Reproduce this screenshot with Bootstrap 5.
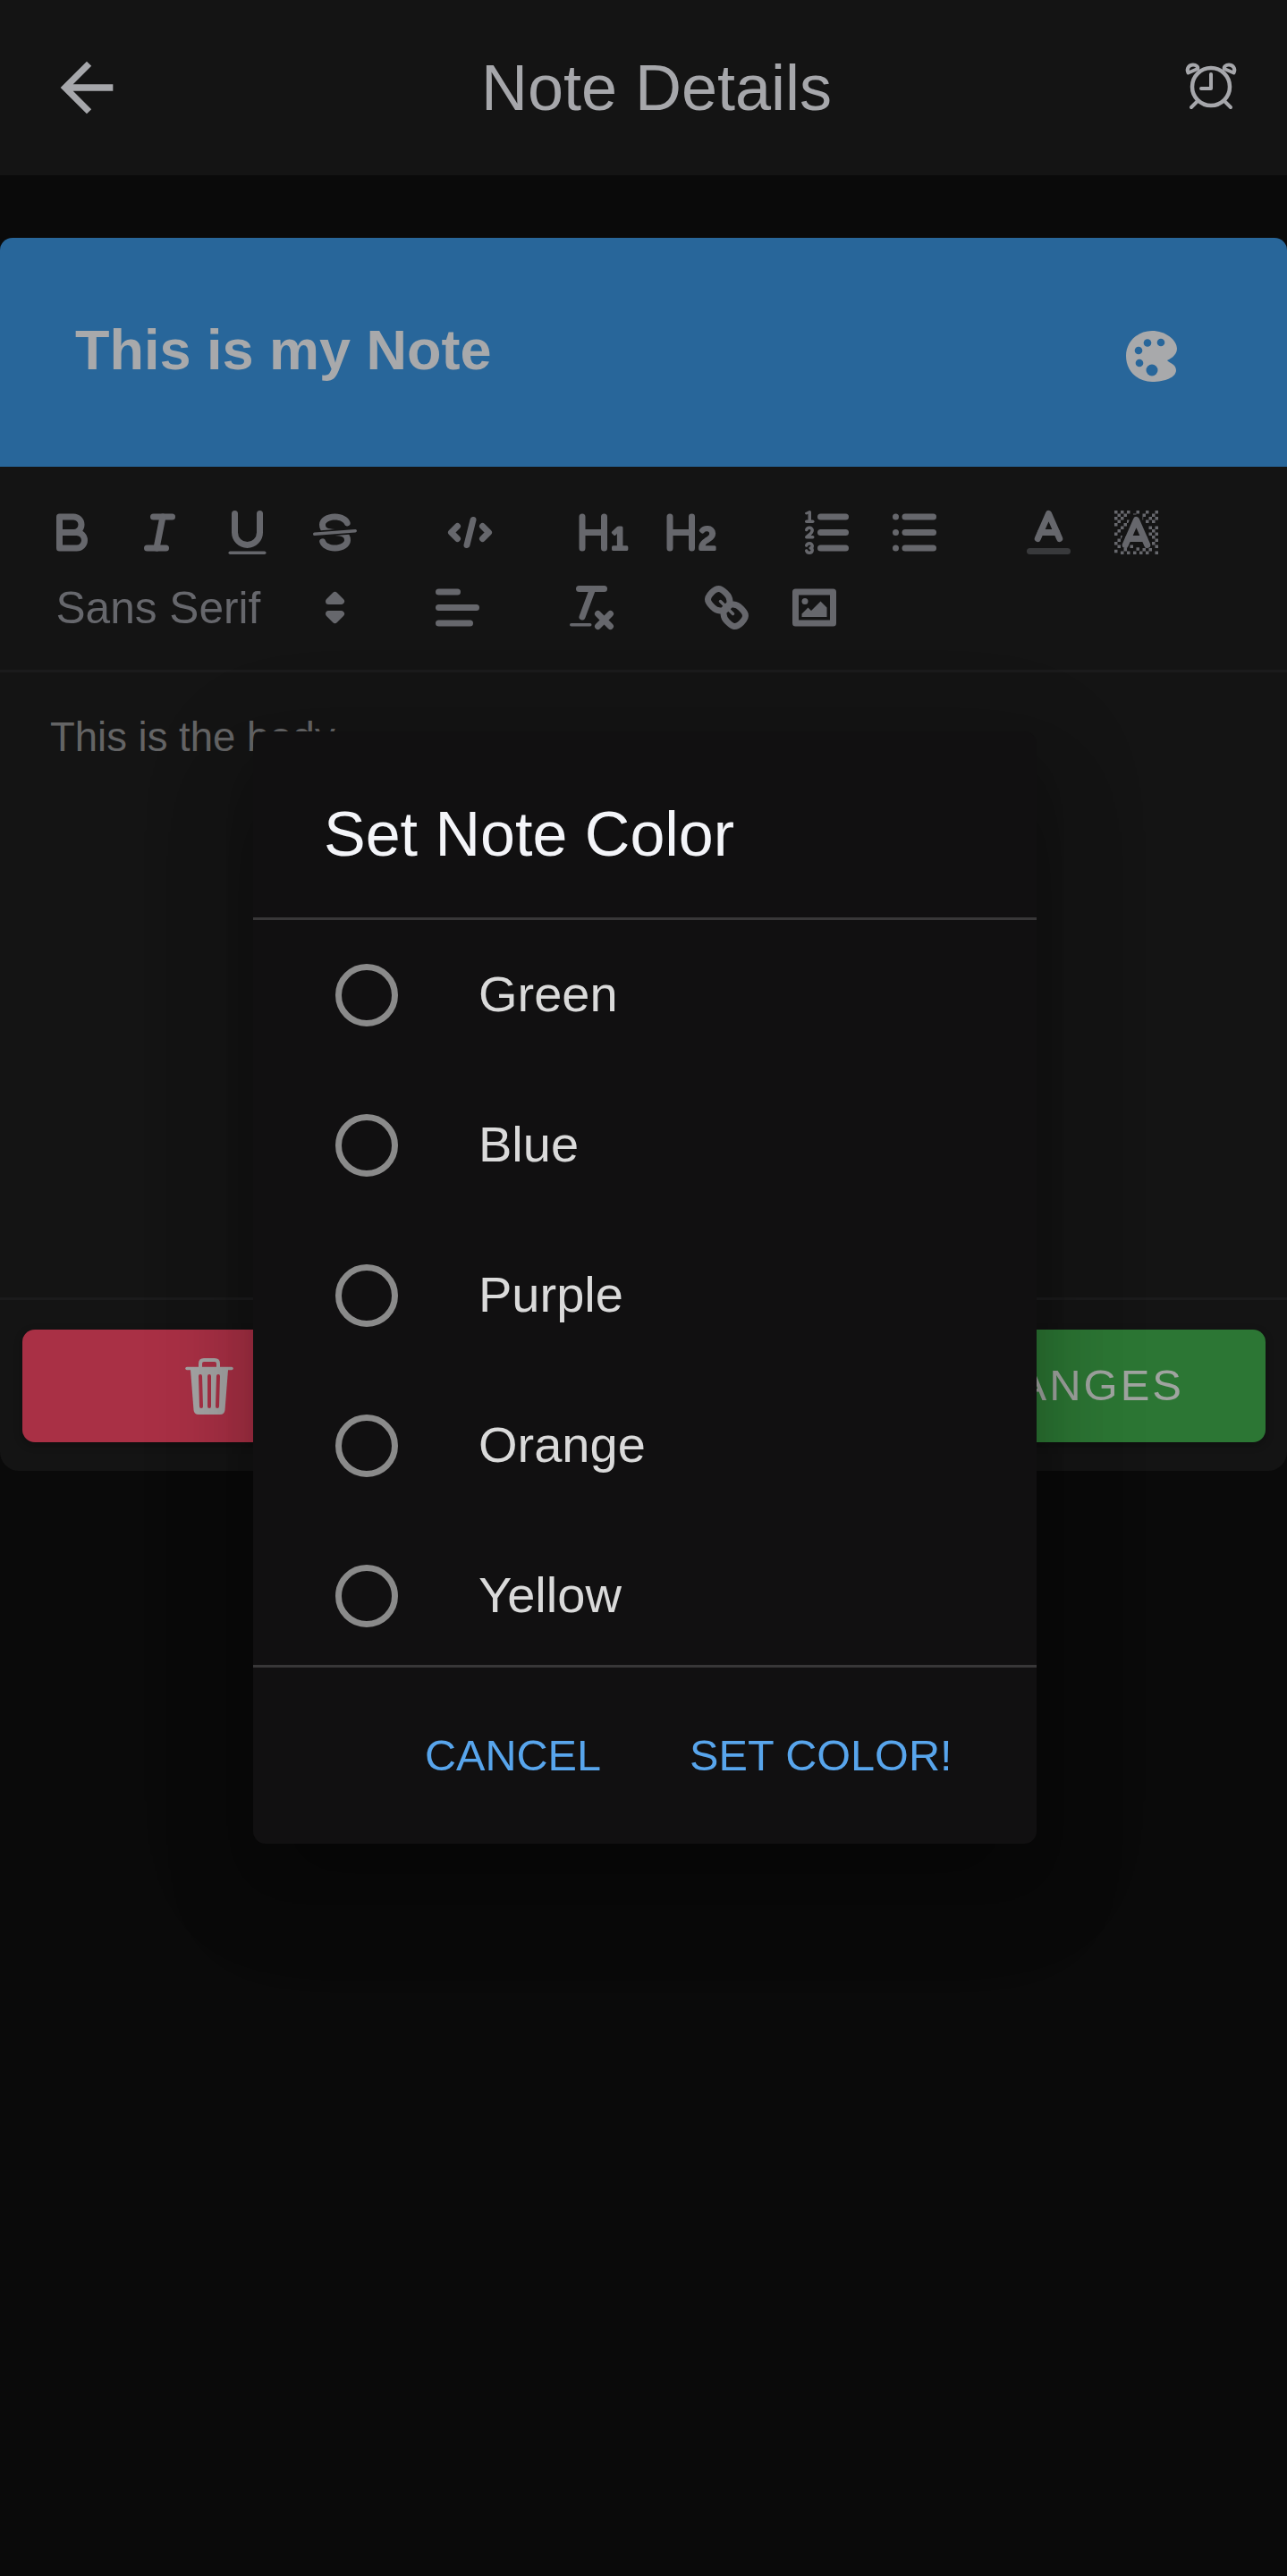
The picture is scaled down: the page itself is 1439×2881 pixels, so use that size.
<!DOCTYPE html>
<html lang="en">
<head>
<meta charset="utf-8">
<title>Note Details</title>
<link href="https://cdn.jsdelivr.net/npm/bootstrap@5.3.0/dist/css/bootstrap.min.css" rel="stylesheet">
<style>
html,body{margin:0;background:#0a0a0a}
body{font-family:"Liberation Sans",Arial,sans-serif;overflow:hidden}
.stage{position:relative;height:2881px;background:#0a0a0a}
.appbar{height:195.5px;background:#141414;color:#a6a7ab}
.appbar-title{font-size:72px;line-height:1;padding-left:17px;margin:0;font-weight:400}
.back-ic{width:88px;height:88px;margin-left:53px;fill:currentColor}
.alarm-ic{width:90px;height:80px;margin-right:39px;flex:none}
.note-card{margin-top:70.5px}
.note-head{height:255.5px;background:#28669a;color:#a8a9ab;border-radius:14px 14px 0 0;padding-left:84px;padding-right:104px}
.note-title{font-size:63px;font-weight:700;line-height:1;margin:0 0 5px;white-space:nowrap}
.pal-ic{width:90px;height:80px;margin-top:13px}
.note-body{background:#141414;border-radius:0 0 21px 21px}
.tbar{padding:31.5px 31.5px 28px;border-bottom:3.5px solid #1b1b1c;color:#66676c}
.tgroup{margin-right:52.5px}
.tbtn{width:98px;height:84px;padding:10.5px 17.5px;flex:none}
.tbtn svg,.pick svg{width:63px;height:63px;display:block}
.pick{width:378px;height:84px;padding-left:31px;font-size:49.6px;line-height:84px;flex:none}
.pick span{margin-top:1px}
.pick svg{margin-right:4px}
.qs{fill:none;stroke:currentColor;stroke-width:2;stroke-linecap:round;stroke-linejoin:round}
.qt{stroke-width:1}
.qf{fill:currentColor;stroke:none}
.qd{stroke:#38393b}
.editor{height:702px;padding:40.5px 52.5px 0 56px;border-bottom:3.5px solid #1b1b1c;color:#646465;font-size:45.5px;line-height:64.6px}
.editor p{margin:0}
.foot-row{padding:33px 24.5px 32px}
.act-del,.act-save{height:125.5px;border-radius:14px;border:0;box-shadow:0 3px 10px rgba(0,0,0,.3);padding:0}
.act-del{width:419px;background:#a93045;color:#a5a5a5}
.act-del svg{width:80px;height:80px;margin-bottom:10px;display:block}
.act-save{width:600px;background:#2c7634;color:#a0a4a0;font-size:49px;letter-spacing:3px}
.dlg{position:absolute;left:283px;top:818px;width:875.5px;height:1243.5px;background:#111011;border-radius:14px;color:#dadada;
 box-shadow:0 38.5px 52.5px -24.5px rgba(0,0,0,.2),0 70px 100px 6px rgba(0,0,0,.14),0 31.5px 120px 16px rgba(0,0,0,.12)}
.dlg-title{height:210.5px;border-bottom:3.5px solid #383738;padding:80px 0 0 79px;font-size:70px;line-height:1;color:#f4f5f9;font-weight:400;margin:0}
.dlg-list{height:833.5px;overflow:hidden}
.opt{height:168px;padding-left:92px;font-size:56px;line-height:1;margin:0}
.opt .form-check-input{width:70px;height:70px;margin:0 90px 0 0;background:transparent;border:7px solid #8a8a8a;float:none;flex:none}
.opt-text{margin-top:-1px}
.dlg-actions{border-top:3.5px solid #383738;height:196px;padding-right:94px;padding-top:4px}
.dlg-btn{font-size:48.6px;line-height:1;color:#58a5ec;background:none;border:0;padding:0;margin-left:99px}
.dlg-btn:hover{color:#58a5ec}
</style>
</head>
<body>
<div class="stage">
  <header class="appbar d-flex align-items-center justify-content-between">
    <svg class="back-ic flex-none" viewBox="0 0 24 24"><path d="M20 11H7.83l5.59-5.59L12 4l-8 8 8 8 1.41-1.41L7.83 13H20v-2z"/></svg>
    <h1 class="appbar-title">Note Details</h1>
    <svg class="alarm-ic" viewBox="0 0 90 80" fill="none" stroke="currentColor" stroke-linecap="round" stroke-linejoin="round">
      <circle cx="44" cy="39" r="21" stroke-width="4.500"/>
      <polyline points="44,25 44,41 33,41" stroke-width="4"/>
      <path d="M22 62l6-6M66 62l-6-6" stroke-width="4"/>
      <path d="M18.500 23.500C16 18 20 14.500 24 14.500 27.500 14.500 30 17 29 19Z" stroke-width="4"/>
      <path d="M69.500 23.500C72 18 68 14.500 64 14.500 60.500 14.500 58 17 59 19Z" stroke-width="4"/>
    </svg>
  </header>

  <main class="note-card">
    <section class="note-head d-flex align-items-center justify-content-between">
      <h2 class="note-title">This is my Note</h2>
      <svg class="pal-ic" viewBox="0 0 90 80">
        <path fill="currentColor" d="M43 10C58 10 71 20 71 30 71 38 62 42 60 43 62 46 70 47 70 54 70 62 58 67 43 67 26 67 14 54 14 38 14 22 27 10 43 10Z"/>
        <g fill="#28669a"><circle cx="38" cy="23.500" r="4.300"/><circle cx="53" cy="23" r="4.300"/><circle cx="28" cy="32" r="4.300"/><circle cx="29" cy="46" r="4.300"/><circle cx="43" cy="54" r="6.500"/></g>
      </svg>
    </section>

    <section class="note-body">
      <div class="tbar d-flex flex-wrap">
        <div class="tgroup d-flex">
          <span class="tbtn"><svg viewBox="0 0 18 18"><path class="qs" d="M5,4H9.5A2.5,2.5,0,0,1,12,6.5v0A2.5,2.5,0,0,1,9.5,9H5A0,0,0,0,1,5,9V4A0,0,0,0,1,5,4Z"/><path class="qs" d="M5,9h5.5A2.5,2.5,0,0,1,13,11.5v0A2.5,2.5,0,0,1,10.5,14H5a0,0,0,0,1,0,0V9A0,0,0,0,1,5,9Z"/></svg></span>
          <span class="tbtn"><svg viewBox="0 0 18 18"><line class="qs" x1="7" x2="13" y1="4" y2="4"/><line class="qs" x1="5" x2="11" y1="14" y2="14"/><line class="qs" x1="8" x2="10" y1="14" y2="4"/></svg></span>
          <span class="tbtn"><svg viewBox="0 0 18 18"><path class="qs" d="M5,3V9a4.012,4.012,0,0,0,4,4H9a4.012,4.012,0,0,0,4-4V3"/><rect class="qf" height="1" rx=".5" ry=".5" width="12" x="3" y="15"/></svg></span>
          <span class="tbtn"><svg viewBox="0 0 18 18"><line class="qs qt" x1="15.5" x2="2.5" y1="8.5" y2="9.500"/><path class="qf" d="M9.007,8C6.542,7.791,6,7.519,6,6.5,6,5.792,7.283,5,9,5c1.571,0,2.765.679,2.969,1.309a1,1,0,0,0,1.9-.617C13.356,4.106,11.354,3,9,3,6.2,3,4,4.538,4,6.5a3.2,3.2,0,0,0,.5,1.843Z"/><path class="qf" d="M8.984,10C11.457,10.208,12,10.479,12,11.5c0,.708-1.283,1.5-3,1.5-1.571,0-2.765-.679-2.969-1.309a1,1,0,1,0-1.9.617C4.644,13.894,6.646,15,9,15c2.8,0,5-1.538,5-3.5a3.2,3.2,0,0,0-.5-1.843Z"/></svg></span>
        </div>
        <div class="tgroup d-flex">
          <span class="tbtn"><svg viewBox="0 0 18 18"><polyline class="qs" points="5 7 3 9 5 11"/><polyline class="qs" points="13 7 15 9 13 11"/><line class="qs" x1="10" x2="8" y1="5" y2="13"/></svg></span>
        </div>
        <div class="tgroup d-flex">
          <span class="tbtn"><svg viewBox="0 0 18 18"><path class="qf" d="M10,4V14a1,1,0,0,1-2,0V10H3v4a1,1,0,0,1-2,0V4A1,1,0,0,1,3,4V8H8V4a1,1,0,0,1,2,0Zm6.06787,9.209H14.98975V7.59863a.54085.54085,0,0,0-.605-.60547h-.62744a1.01119,1.01119,0,0,0-.748.29688L11.645,8.56641a.5435.5435,0,0,0-.022.8584l.28613.30762a.53861.53861,0,0,0,.84717.0332l.09912-.08789a1.2137,1.2137,0,0,0,.2417-.35254h.02246s-.01123.30859-.01123.60547V13.209H12.041a.54085.54085,0,0,0-.605.60547v.43945a.54085.54085,0,0,0,.605.60547h4.02686a.54085.54085,0,0,0,.605-.60547v-.43945A.54085.54085,0,0,0,16.06787,13.209Z"/></svg></span>
          <span class="tbtn"><svg viewBox="0 0 18 18"><path class="qf" d="M16.73975,13.81445v.43945a.54085.54085,0,0,1-.605.60547H11.855a.58392.58392,0,0,1-.64893-.60547V14.0127c0-2.90527,3.39941-3.42187,3.39941-4.55469a.77675.77675,0,0,0-.84717-.78125,1.17684,1.17684,0,0,0-.83594.38477c-.2749.26367-.561.374-.85791.13184l-.4292-.34082c-.30811-.24219-.38525-.51758-.1543-.81445a2.97155,2.97155,0,0,1,2.45361-1.17676,2.45393,2.45393,0,0,1,2.68408,2.40918c0,2.45312-3.1792,2.92676-3.27832,3.93848h2.79443A.54085.54085,0,0,1,16.73975,13.81445ZM9,3A.99974.99974,0,0,0,8,4V8H3V4A1,1,0,0,0,1,4V14a1,1,0,0,0,2,0V10H8v4a1,1,0,0,0,2,0V4A.99974.99974,0,0,0,9,3Z"/></svg></span>
        </div>
        <div class="tgroup d-flex">
          <span class="tbtn"><svg viewBox="0 0 18 18"><line class="qs" x1="7" x2="15" y1="4" y2="4"/><line class="qs" x1="7" x2="15" y1="9" y2="9"/><line class="qs" x1="7" x2="15" y1="14" y2="14"/><line class="qs qt" x1="2.5" x2="4.5" y1="5.5" y2="5.5"/><path class="qf" d="M3.5,6A0.5,0.5,0,0,1,3,5.5V3.085l-0.276.138A0.5,0.5,0,0,1,2.053,3c-0.124-.247-0.023-0.324.224-0.447l1-.5A0.5,0.5,0,0,1,4,2.5v3A0.5,0.5,0,0,1,3.5,6Z"/><path class="qs qt" d="M4.5,10.5h-2c0-.234,1.85-1.076,1.85-2.234A0.959,0.959,0,0,0,2.5,8.156"/><path class="qs qt" d="M2.5,14.846a0.959,0.959,0,0,0,1.85-.109A0.7,0.7,0,0,0,3.75,14a0.688,0.688,0,0,0,.6-0.736,0.959,0.959,0,0,0-1.85-.109"/></svg></span>
          <span class="tbtn"><svg viewBox="0 0 18 18"><line class="qs" x1="6" x2="15" y1="4" y2="4"/><line class="qs" x1="6" x2="15" y1="9" y2="9"/><line class="qs" x1="6" x2="15" y1="14" y2="14"/><line class="qs" x1="3" x2="3" y1="4" y2="4"/><line class="qs" x1="3" x2="3" y1="9" y2="9"/><line class="qs" x1="3" x2="3" y1="14" y2="14"/></svg></span>
        </div>
        <div class="tgroup d-flex">
          <span class="tbtn"><svg viewBox="0 0 18 18"><line class="qs qd" x1="3" x2="15" y1="15" y2="15"/><polyline class="qs" points="5.5 11 9 3 12.5 11"/><line class="qs" x1="11.63" x2="6.38" y1="9" y2="9"/></svg></span>
          <span class="tbtn"><svg viewBox="0 0 18 18"><path class="qf" d="M2 2h1v1h-1zM4 2h1v1h-1zM6 2h1v1h-1zM9 2h1v1h-1zM12 2h1v1h-1zM15 2h1v1h-1zM3 3h1v1h-1zM5 3h1v1h-1zM8 3h1v.3h-1zM11 3h1v1h-1zM14 3h1v1h-1zM2 4h1v1h-1zM4 4h1v1h-1zM11 4h.2v1h-.2zM13 4h1v1h-1zM15 4h1v1h-1zM3 5h1v1h-1zM6 5h.8l-.4 1h-.4zM12 5h1v1h-1zM14 5h1v1h-1zM2 6h1v1h-1zM5 6h1v1h-1zM13 7h1v1h-1zM15 7h1v1h-1zM4 7h1v1h-1zM3 8h1v1h-1zM14 8h1v1h-1zM2 9h1v1h-1zM13 9h1v1h-1zM15 9h1v1h-1zM4 10h.6l-.4 1h-.2zM14 10h1v1h-1zM3 11h1v1h-1zM15 11h1v1h-1zM2 12h1v1h-1zM14 12h1v1h-1zM3 13h1v1h-1zM15 13h1v1h-1zM7 13h1v1h-1zM9 13.800h1v1h-1zM11 14h1v1h-1zM13 14h1v1h-1zM2 14.500h1v1h-1zM5 14h1v1h-1zM4 15h1v1h-1zM6 15h1v1h-1zM8 15h1v1h-1zM10 15h1v1h-1zM12 15h1v1h-1zM15 15h1v1h-1z"/><polyline class="qs" points="5.5 13 9 5 12.5 13"/><line class="qs" x1="11.63" x2="6.38" y1="11" y2="11"/></svg></span>
        </div>
        <div class="tgroup d-flex">
          <div class="pick d-flex justify-content-between align-items-center"><span>Sans Serif</span><svg viewBox="0 0 18 18"><polygon class="qs" points="7 11 9 13 11 11 7 11"/><polygon class="qs" points="7 7 9 5 11 7 7 7"/></svg></div>
        </div>
        <div class="tgroup d-flex">
          <span class="tbtn"><svg viewBox="0 0 18 18"><line class="qs" x1="3" x2="15" y1="9" y2="9"/><line class="qs" x1="3" x2="13" y1="14" y2="14"/><line class="qs" x1="3" x2="9" y1="4" y2="4"/></svg></span>
        </div>
        <div class="tgroup d-flex">
          <span class="tbtn"><svg viewBox="0 0 18 18"><line class="qs" x1="5" x2="13" y1="3" y2="3"/><line class="qs" x1="6" x2="9.35" y1="12" y2="3"/><line class="qs" x1="11" x2="15" y1="11" y2="15"/><line class="qs" x1="15" x2="11" y1="11" y2="15"/><rect class="qf" height="1" rx=".5" ry=".5" width="7" x="2" y="14"/></svg></span>
        </div>
        <div class="tgroup d-flex">
          <span class="tbtn"><svg viewBox="0 0 18 18"><line class="qs qt" x1="7" x2="11" y1="7" y2="11"/><path class="qs" d="M8.9,4.577a3.476,3.476,0,0,1,.36,4.679A3.476,3.476,0,0,1,4.577,8.9C3.185,7.5,2.035,6.4,4.217,4.217S7.5,3.185,8.9,4.577Z"/><path class="qs" d="M13.423,9.1a3.476,3.476,0,0,0-4.679-.36,3.476,3.476,0,0,0,.36,4.679c1.392,1.392,2.5,2.542,4.679.36S14.815,10.5,13.423,9.1Z"/></svg></span>
          <span class="tbtn"><svg viewBox="0 0 18 18"><rect class="qs" height="10" width="12" x="3" y="4"/><circle class="qf" cx="6" cy="7" r="1"/><polyline class="qf" points="5 12 5 11 7 9 8 10 11 7 13 9 13 12 5 12"/></svg></span>
        </div>
      </div>

      <div class="editor"><p>This is the body</p></div>

      <div class="foot-row d-flex justify-content-between">
        <button type="button" class="btn act-del d-flex align-items-center justify-content-center" aria-label="Delete">
          <svg viewBox="0 0 80 80">
            <path fill="none" stroke="currentColor" stroke-width="3.500" stroke-linecap="round" d="M15 25.500H65"/>
            <path fill="none" stroke="currentColor" stroke-width="4" d="M30 25V20Q30 16 34 16H46Q50 16 50 20V25"/>
            <path fill="currentColor" d="M19 27H61L57.500 72Q57 77 52 77H28Q23 77 22.500 72Z"/>
            <path stroke="#a93045" stroke-width="4" stroke-linecap="round" d="M30 34L31 68M40 34V68M50 34L49 68"/>
          </svg>
        </button>
        <button type="button" class="btn act-save text-uppercase">Save Changes</button>
      </div>
    </section>
  </main>

  <div class="dlg" role="dialog" aria-modal="true">
    <h3 class="dlg-title">Set Note Color</h3>
    <div class="dlg-list">
      <label class="opt d-flex align-items-center"><input class="form-check-input" type="radio" name="clr"><span class="opt-text">Green</span></label>
      <label class="opt d-flex align-items-center"><input class="form-check-input" type="radio" name="clr"><span class="opt-text">Blue</span></label>
      <label class="opt d-flex align-items-center"><input class="form-check-input" type="radio" name="clr"><span class="opt-text">Purple</span></label>
      <label class="opt d-flex align-items-center"><input class="form-check-input" type="radio" name="clr"><span class="opt-text">Orange</span></label>
      <label class="opt d-flex align-items-center"><input class="form-check-input" type="radio" name="clr"><span class="opt-text">Yellow</span></label>
    </div>
    <div class="dlg-actions d-flex align-items-center justify-content-end">
      <button type="button" class="btn dlg-btn">CANCEL</button>
      <button type="button" class="btn dlg-btn">SET COLOR!</button>
    </div>
  </div>
</div>
<script src="https://cdn.jsdelivr.net/npm/bootstrap@5.3.0/dist/js/bootstrap.bundle.min.js"></script>
</body>
</html>
